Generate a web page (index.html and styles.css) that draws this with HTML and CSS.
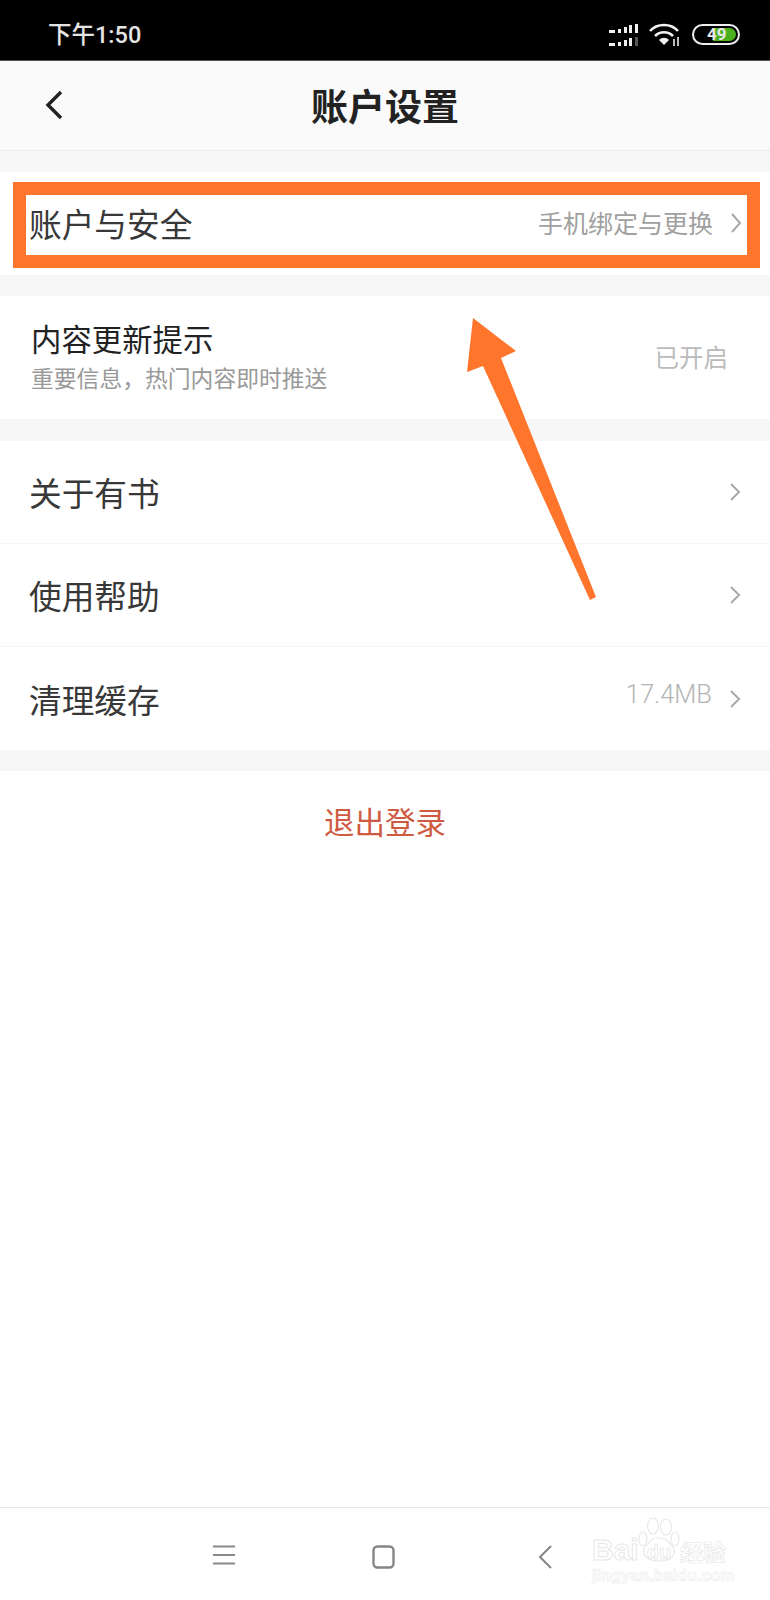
FILE: index.html
```html
<!DOCTYPE html>
<html lang="zh-CN">
<head>
    <meta charset="UTF-8">
    <meta name="viewport" content="width=device-width, initial-scale=1.0">
    <title>账户设置</title>
    <link rel="stylesheet" href="styles.css">
</head>
<body>
    <div class="status-bar">
        <span class="status-time">下午1:50</span>
        <div class="status-icons">
            <svg class="signal" width="30" height="22" viewBox="0 0 30 22">
                <g fill="#f0f0f0">
                    <rect x="0" y="6" width="6" height="3"/>
                    <rect x="9" y="5" width="3" height="4"/>
                    <rect x="15" y="3" width="3" height="6"/>
                    <rect x="20" y="1" width="3" height="8"/>
                    <rect x="26" y="0" width="3" height="9"/>
                    <rect x="0" y="19" width="6" height="3"/>
                    <rect x="9" y="18" width="3" height="4"/>
                    <rect x="15" y="16" width="3" height="6"/>
                    <rect x="20" y="14" width="3" height="8"/>
                </g>
                <rect x="26" y="13" width="3" height="9" fill="#555"/>
            </svg>
            <svg class="wifi" width="32" height="24" viewBox="0 0 32 24">
                <g fill="none" stroke="#f2f2f2" stroke-width="2.6">
                    <path d="M1 8 C8 0 22 0 29 8"/>
                    <path d="M6 13 C11 8 19 8 24 13"/>
                </g>
                <path d="M10 17 C13 14 17 14 20 17 L15 22 Z" fill="#f2f2f2"/>
                <path d="M25 16 V23 M29 14 V23" stroke="#bbb" stroke-width="2" fill="none"/>
            </svg>
            <div class="battery">
                <div class="battery-fill"></div>
                <span class="battery-num">49</span>
            </div>
        </div>
    </div>

    <header class="title-bar">
        <svg class="back-icon" width="18" height="30" viewBox="0 0 18 30">
            <path d="M16 2 L3 15 L16 28" fill="none" stroke="#222" stroke-width="3.4"/>
        </svg>
        <h1 class="page-title">账户设置</h1>
    </header>

    <section class="group">
        <div class="row row-marked">
            <span class="row-label">账户与安全</span>
            <span class="row-value">手机绑定与更换</span>
            <svg class="chevron" width="12" height="22" viewBox="0 0 12 22">
                <path d="M2 2 L10 11 L2 20" fill="none" stroke="#a8a8a8" stroke-width="2"/>
            </svg>
        </div>
    </section>

    <section class="group">
        <div class="row row-notify">
            <div class="row-text">
                <span class="row-title">内容更新提示</span>
                <span class="row-sub">重要信息，热门内容即时推送</span>
            </div>
            <span class="row-value row-value-light">已开启</span>
        </div>
    </section>

    <section class="group group-list">
        <div class="row row-plain">
            <span class="row-label">关于有书</span>
            <svg class="chevron" width="12" height="20" viewBox="0 0 12 20">
                <path d="M2 2 L10 10 L2 18" fill="none" stroke="#a8a8a8" stroke-width="2"/>
            </svg>
        </div>
        <div class="row row-plain">
            <span class="row-label">使用帮助</span>
            <svg class="chevron" width="12" height="20" viewBox="0 0 12 20">
                <path d="M2 2 L10 10 L2 18" fill="none" stroke="#a8a8a8" stroke-width="2"/>
            </svg>
        </div>
        <div class="row row-plain">
            <span class="row-label">清理缓存</span>
            <span class="row-size">17.4MB</span>
            <svg class="chevron" width="12" height="20" viewBox="0 0 12 20">
                <path d="M2 2 L10 10 L2 18" fill="none" stroke="#a8a8a8" stroke-width="2"/>
            </svg>
        </div>
    </section>

    <section class="logout">退出登录</section>

    <nav class="nav-bar">
        <svg class="nav-icon nav-menu" width="22" height="20" viewBox="0 0 22 20">
            <path d="M0 1.5 H22 M0 10 H22 M0 18.5 H22" stroke="#8a8a8a" stroke-width="2"/>
        </svg>
        <svg class="nav-icon nav-home" width="23" height="24" viewBox="0 0 23 24">
            <rect x="1.5" y="1.5" width="20" height="21" rx="4" fill="none" stroke="#858585" stroke-width="2.4"/>
        </svg>
        <svg class="nav-icon nav-back" width="14" height="24" viewBox="0 0 14 24">
            <path d="M13 1 L2 12 L13 23" fill="none" stroke="#858585" stroke-width="2"/>
        </svg>
    </nav>

    <!-- annotation arrow on top of the screenshot -->
    <svg class="arrow" width="770" height="1600" viewBox="0 0 770 1600">
        <polygon points="473,318 516,351 501,358 596,597 590,600 483,366 467,372" fill="#ff752b"/>
    </svg>

    <div class="watermark">
        <svg class="paw" width="44" height="45" viewBox="0 0 44 45">
            <g fill="none" stroke="#e8e8e8" stroke-width="1.2">
                <ellipse cx="6" cy="22" rx="4" ry="7"/>
                <ellipse cx="16" cy="9" rx="5.5" ry="8"/>
                <ellipse cx="29" cy="10" rx="5.5" ry="8"/>
                <ellipse cx="38" cy="22" rx="4" ry="7"/>
                <path d="M11 27 C15 19 29 19 33 27 C41 33 38 44 22 44 C6 44 3 33 11 27 Z"/>
            </g>
        </svg>
        <div class="wm-line">
            <span class="wm-bai">Bai</span>
            <span class="wm-du">du</span>
            <span class="wm-cn">经验</span>
        </div>
        <div class="wm-url">jingyan.baidu.com</div>
    </div>
</body>
</html>
```

FILE: styles.css
```css
* {
    margin: 0;
    padding: 0;
    box-sizing: border-box;
    font-family: "Noto Sans CJK SC", "Noto Sans", sans-serif;
}

body {
    position: relative;
    width: 770px;
    height: 1600px;
    overflow: hidden;
    background: #f7f7f7;
    display: flex;
    flex-direction: column;
}

.status-bar {
    height: 61px;
    flex: none;
    background: #000;
    border-bottom: 1px solid #555;
    display: flex;
    justify-content: space-between;
    align-items: center;
    padding: 9px 30px 0 48px;
}

.status-time {
    font-family: Roboto, "Noto Sans CJK SC", sans-serif;
    font-size: 23.5px;
    font-weight: 500;
    color: #e4e4e4;
    line-height: 30px;
}

.status-icons {
    display: flex;
    align-items: center;
    gap: 10px;
    margin-left: auto;
}

.battery {
    position: relative;
    width: 48px;
    height: 21px;
    border: 2px solid #eee;
    border-radius: 11px;
    overflow: hidden;
    margin-left: 1px;
}

.battery-fill {
    position: absolute;
    left: 19px;
    top: 2px;
    bottom: 2px;
    right: 2px;
    background: #4caf1e;
    border-radius: 0 8px 8px 0;
}

.battery-num {
    position: absolute;
    left: 13px;
    top: -2px;
    font-family: Roboto, sans-serif;
    font-size: 17px;
    font-weight: 700;
    line-height: 21px;
    color: #e8e8e8;
}

.title-bar {
    height: 90px;
    flex: none;
    background: #fafafa;
    border-bottom: 1px solid #ececec;
    display: flex;
    align-items: center;
    justify-content: center;
    position: relative;
}

.back-icon {
    position: absolute;
    left: 45px;
    top: 29px;
}

.page-title {
    font-size: 37px;
    font-weight: 700;
    color: #222;
    line-height: 44px;
    margin-top: -2px;
}

.group {
    flex: none;
    background: #fff;
    margin-top: 21px;
}

.group-list {
    margin-top: 22px;
}

.row {
    display: flex;
    align-items: center;
}

.row-marked {
    height: 86px;
    margin: 10px 10px 7px 13px;
    border: 13px solid #ff752b;
    padding: 0 5px 4px 3px;
}

.row-label {
    font-size: 32.7px;
    color: #383838;
    line-height: 40px;
    flex: 1;
}

.row-value {
    font-size: 25px;
    color: #a0a0a0;
    line-height: 30px;
    margin-right: 17px;
    margin-top: -2px;
}

.row-value-light {
    font-size: 24.5px;
    color: #bbb;
    margin-right: 42px;
}

.row-size {
    font-family: Roboto, sans-serif;
    font-size: 25.5px;
    font-weight: 300;
    color: #b4b4b4;
    margin-right: 17px;
    margin-top: -10px;
}

.row-notify {
    height: 123px;
    padding-left: 31px;
    justify-content: space-between;
}

.row-text {
    display: flex;
    flex-direction: column;
    gap: 4px;
    margin-top: -4px;
}

.row-title {
    font-size: 30.4px;
    color: #222;
    line-height: 40px;
}

.row-sub {
    font-size: 22.8px;
    color: #999;
    line-height: 32px;
}

.row-plain {
    height: 103px;
    padding: 0 29px;
    border-bottom: 1px solid #f6f6f6;
}

.row-plain:last-child {
    border-bottom: 0;
}

.logout {
    flex: 1;
    margin-top: 21px;
    background: #fff;
    text-align: center;
    font-size: 30.5px;
    color: #cf5a42;
    line-height: 40px;
    padding-top: 30px;
}

.nav-bar {
    height: 93px;
    flex: none;
    background: #fff;
    border-top: 1px solid #e8e8e8;
    position: relative;
}

.nav-icon {
    position: absolute;
    top: 37px;
}

.nav-menu {
    left: 213px;
}

.nav-home {
    left: 372px;
}

.nav-back {
    left: 538px;
}

.arrow {
    position: absolute;
    left: 0;
    top: 0;
    pointer-events: none;
}

.watermark {
    position: absolute;
    left: 590px;
    top: 1517px;
    width: 140px;
    height: 68px;
}

.paw {
    position: absolute;
    left: 47px;
    top: 0;
}

.wm-line {
    position: absolute;
    left: 2px;
    top: 20px;
    display: flex;
    align-items: center;
    white-space: nowrap;
}

.wm-bai {
    font-family: "Liberation Sans", sans-serif;
    font-size: 30px;
    line-height: 26px;
    font-weight: 700;
    color: #fff;
    -webkit-text-stroke: 1px #e8e8e8;
    width: 48px;
}

.wm-du {
    width: 32px;
    height: 20px;
    margin: 5px 0 0 3px;
    font-family: "Liberation Sans", sans-serif;
    font-size: 20px;
    font-weight: 700;
    line-height: 18px;
    text-align: center;
    color: #fff;
    -webkit-text-stroke: 0.7px #e4e4e4;
}

.wm-cn {
    font-size: 23px;
    line-height: 24px;
    font-weight: 700;
    margin-left: 5px;
    margin-top: 2px;
    color: #fff;
    -webkit-text-stroke: 0.7px #e8e8e8;
}

.wm-url {
    position: absolute;
    left: 2px;
    top: 49px;
    width: 138px;
    font-family: "Liberation Sans", sans-serif;
    font-size: 16.3px;
    line-height: 18px;
    font-weight: 700;
    color: #fff;
    -webkit-text-stroke: 0.6px #ebebeb;
    white-space: nowrap;
}
```
